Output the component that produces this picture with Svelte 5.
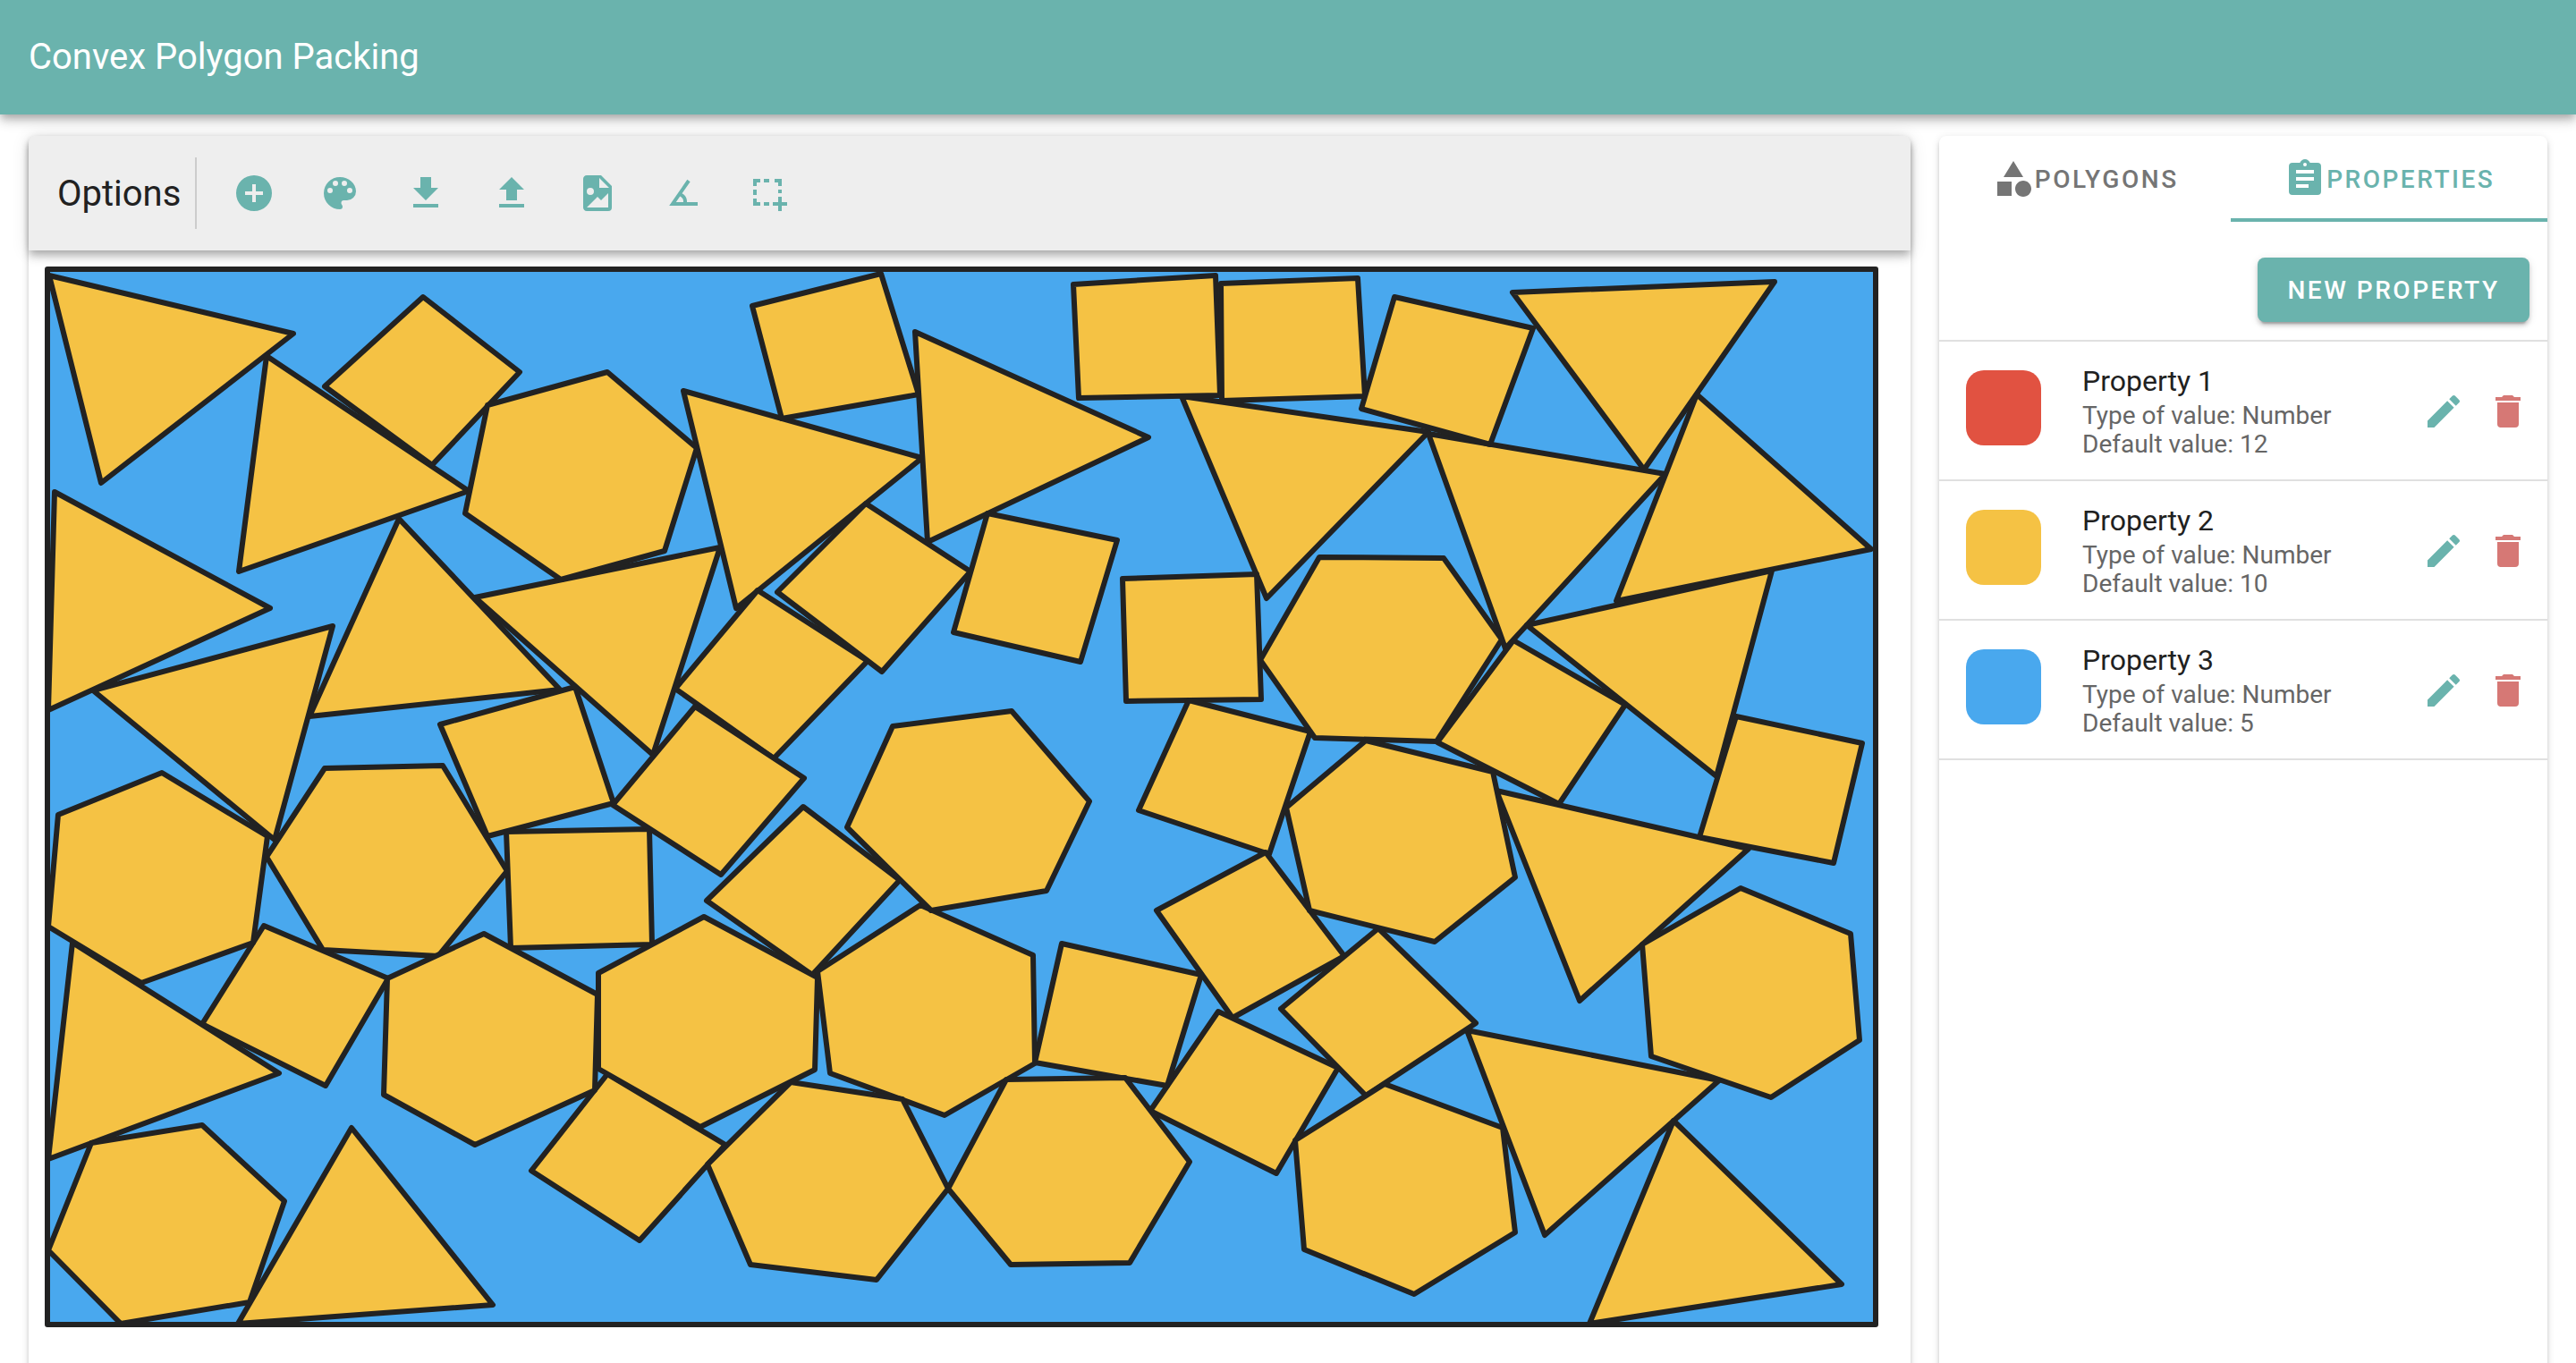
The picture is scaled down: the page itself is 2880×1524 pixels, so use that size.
<script>
  const tools = [
    { label: 'Add', path: 'M17,13H13V17H11V13H7V11H11V7H13V11H17M12,2A10,10 0 0,0 2,12A10,10 0 0,0 12,22A10,10 0 0,0 22,12A10,10 0 0,0 12,2Z' },
    { label: 'Colors', path: 'M17.5,12A1.5,1.5 0 0,1 16,10.5A1.5,1.5 0 0,1 17.5,9A1.5,1.5 0 0,1 19,10.5A1.5,1.5 0 0,1 17.5,12M14.5,8A1.5,1.5 0 0,1 13,6.5A1.5,1.5 0 0,1 14.5,5A1.5,1.5 0 0,1 16,6.5A1.5,1.5 0 0,1 14.5,8M9.5,8A1.5,1.5 0 0,1 8,6.5A1.5,1.5 0 0,1 9.5,5A1.5,1.5 0 0,1 11,6.5A1.5,1.5 0 0,1 9.5,8M6.5,12A1.5,1.5 0 0,1 5,10.5A1.5,1.5 0 0,1 6.5,9A1.5,1.5 0 0,1 8,10.5A1.5,1.5 0 0,1 6.5,12M12,3A9,9 0 0,0 3,12A9,9 0 0,0 12,21A1.5,1.5 0 0,0 13.5,19.5C13.5,19.11 13.35,18.76 13.11,18.5C12.88,18.23 12.73,17.88 12.73,17.5A1.5,1.5 0 0,1 14.23,16H16A5,5 0 0,0 21,11C21,6.58 16.97,3 12,3Z' },
    { label: 'Download', path: 'M5,20H19V18H5M19,9H15V3H9V9H5L12,16L19,9Z' },
    { label: 'Upload', path: 'M9,16V10H5L12,3L19,10H15V16H9M5,20V18H19V20H5Z' },
    { label: 'Export image', path: 'M13,9H18.5L13,3.5V9M6,2H14L20,8V20A2,2 0 0,1 18,22H6C4.89,22 4,21.1 4,20V4C4,2.89 4.89,2 6,2M6,20H15L18,20V12L14,16L12,14L6,20M8,9A2,2 0 0,0 6,11A2,2 0 0,0 8,13A2,2 0 0,0 10,11A2,2 0 0,0 8,9Z' },
    { label: 'Angle', path: 'M20,19H4.09L14.18,4.43L15.82,5.57L11.28,12.13C12.89,12.96 14,14.62 14,16.54C14,16.7 14,16.85 13.97,17H20V19M7.91,17H11.96C12,16.85 12,16.7 12,16.54C12,15.28 11.24,14.22 10.14,13.78L7.91,17Z' },
    { label: 'New selection', path: 'M3,4H7V6H5V8H3V4M9,4H12V6H9V4M15,4H19V8H17V6H15V4M3,10H5V13H3V10M17,10H19V12H17V10M3,15H5V17H7V19H3V15M9,17H12V19H9V17M17,14H19V17H22V19H19V22H17V19H14V17H17V14Z' }
  ];

  const icons = {
    shapes: 'M11,13.5V21.5H3V13.5H11M12,2L17.5,11H6.5L12,2M17.5,13C20,13 22,15 22,17.5C22,20 20,22 17.5,22C15,22 13,20 13,17.5C13,15 15,13 17.5,13Z',
    clipboard: 'M17,9H7V7H17M17,13H7V11H17M14,17H7V15H14M12,3A1,1 0 0,1 13,4A1,1 0 0,1 12,5A1,1 0 0,1 11,4A1,1 0 0,1 12,3M19,3H14.82C14.4,1.84 13.3,1 12,1C10.7,1 9.6,1.84 9.18,3H5A2,2 0 0,0 3,5V19A2,2 0 0,0 5,21H19A2,2 0 0,0 21,19V5A2,2 0 0,0 19,3Z',
    pencil: 'M20.71,7.04C21.1,6.65 21.1,6 20.71,5.63L18.37,3.29C18,2.9 17.35,2.9 16.96,3.29L15.12,5.12L18.87,8.87M3,17.25V21H6.75L17.81,9.93L14.06,6.18L3,17.25Z',
    trash: 'M19,4H15.5L14.5,3H9.5L8.5,4H5V6H19M6,19A2,2 0 0,0 8,21H16A2,2 0 0,0 18,19V7H6V19Z'
  };

  const properties = [
    { name: 'Property 1', type: 'Number', value: 12, color: '#e15241' },
    { name: 'Property 2', type: 'Number', value: 10, color: '#f5c244' },
    { name: 'Property 3', type: 'Number', value: 5, color: '#49a8ee' }
  ];

  const triangles = [
    '55,308 328,373 113,540',
    '298,398 524,549 267,639',
    '61,550 302,680 54,794',
    '372,700 104,772 307,939',
    '446,580 626,771 346,801',
    '531,668 805,612 730,844',
    '81,1054 312,1200 54,1296',
    '393,1261 551,1459 266,1480',
    '764,437 1031,512 823,680',
    '1023,371 1284,489 1037,606',
    '1321,443 1597,483 1416,669',
    '1597,485 1862,530 1683,725',
    '1691,327 1984,315 1838,525',
    '1897,441 2092,614 1807,672',
    '1981,638 1707,699 1919,868',
    '1673,884 1955,949 1766,1119',
    '1640,1152 1922,1208 1727,1381',
    '1871,1253 2059,1436 1777,1480'
  ];

  const squares = [
    '473,332 581,416 483,520 363,432',
    '492,810 643,768 686,898 545,935',
    '566,930 726,927 729,1056 571,1060',
    '295,1035 434,1094 364,1214 226,1145',
    '679,1201 594,1309 715,1387 811,1280',
    '847,660 970,739 865,848 755,770',
    '968,563 1085,639 986,751 869,662',
    '777,790 899,870 806,978 685,900',
    '898,902 1006,984 908,1090 790,1007',
    '841,342 985,306 1027,441 874,468',
    '1104,574 1249,604 1208,740 1066,707',
    '1200,318 1359,308 1364,442 1206,445',
    '1365,317 1518,311 1526,443 1366,448',
    '1559,332 1714,367 1666,497 1522,457',
    '1255,647 1405,642 1410,782 1259,784',
    '1329,783 1465,818 1419,955 1273,906',
    '1692,716 1817,788 1743,899 1607,830',
    '1941,801 2082,831 2050,965 1900,936',
    '1415,953 1503,1069 1378,1138 1293,1018',
    '1541,1038 1650,1144 1527,1225 1432,1128',
    '1362,1131 1496,1194 1427,1312 1286,1242',
    '1187,1055 1343,1090 1305,1214 1157,1188'
  ];

  const hexagons = [
    '679,416 779,501 743,616 627,648 520,574 545,453',
    '181,864 299,935 283,1054 158,1099 54,1036 65,911',
    '363,859 495,856 567,974 490,1069 361,1062 298,958',
    '226,1258 318,1343 279,1456 135,1480 54,1398 102,1278',
    '541,1044 668,1112 665,1219 531,1280 429,1224 433,1094',
    '787,1025 914,1093 911,1196 783,1260 669,1195 669,1088',
    '1029,1012 1155,1068 1157,1189 1056,1247 928,1200 914,1086',
    '998,812 1131,795 1218,896 1170,996 1041,1018 947,925',
    '884,1210 1009,1229 1060,1329 980,1431 839,1414 791,1302',
    '1125,1207 1258,1205 1330,1299 1263,1412 1130,1414 1060,1329',
    '1475,623 1614,624 1679,715 1606,829 1470,825 1409,738',
    '1527,828 1669,863 1694,981 1604,1053 1464,1018 1438,903',
    '1946,993 2069,1044 2079,1163 1980,1227 1846,1181 1836,1056',
    '1548,1212 1680,1261 1694,1378 1581,1447 1458,1397 1448,1275'
  ];

  const polygons = [...triangles, ...squares, ...hexagons];

  let tab = $state('properties');
</script>

{#snippet icon(path)}
  <svg class="icon" viewBox="0 0 24 24" aria-hidden="true"><path d={path} /></svg>
{/snippet}

<div class="app">
  <header class="app-bar">
    <h1>Convex Polygon Packing</h1>
  </header>

  <main class="content">
    <section class="card" aria-label="Workspace">
      <div class="toolbar">
        <h2>Options</h2>
        <div class="tools">
          {#each tools as tool}
            <button class="icon-button" aria-label={tool.label}>{@render icon(tool.path)}</button>
          {/each}
        </div>
      </div>
      <div class="canvas">
        <svg class="board" viewBox="50 298 2050 1186" role="img" aria-label="Packed polygons">
          <rect class="container" x="53" y="301" width="2044" height="1180" />
          {#each polygons as points}
            <polygon {points} />
          {/each}
          <rect class="frame" x="53" y="301" width="2044" height="1180" />
        </svg>
      </div>
    </section>

    <aside class="card" aria-label="Details">
      <div class="tabs" role="tablist">
        <button class="tab" class:active={tab === 'polygons'} role="tab" aria-selected={tab === 'polygons'} onclick={() => (tab = 'polygons')}>
          {@render icon(icons.shapes)}<span>POLYGONS</span>
        </button>
        <button class="tab" class:active={tab === 'properties'} role="tab" aria-selected={tab === 'properties'} onclick={() => (tab = 'properties')}>
          {@render icon(icons.clipboard)}<span>PROPERTIES</span>
        </button>
      </div>
      <div class="actions">
        <button class="primary">NEW PROPERTY</button>
      </div>
      <ul class="list">
        {#each properties as property}
          <li class="row">
            <span class="swatch" style="background: {property.color}"></span>
            <div class="info">
              <h3>{property.name}</h3>
              <p>Type of value: {property.type}</p>
              <p>Default value: {property.value}</p>
            </div>
            <div class="row-actions">
              <button class="edit" aria-label="Edit {property.name}">{@render icon(icons.pencil)}</button>
              <button class="delete" aria-label="Delete {property.name}">{@render icon(icons.trash)}</button>
            </div>
          </li>
        {/each}
      </ul>
    </aside>
  </main>
</div>

<style>
  :global(body) {
    margin: 0;
    background: #fff;
  }

  .app {
    --teal: #6ab3ad;
    --shadow-4: 0 4px 8px -2px rgba(0, 0, 0, 0.2), 0 8px 10px rgba(0, 0, 0, 0.14), 0 2px 20px rgba(0, 0, 0, 0.12);
    --shadow-2: 0 6px 2px -4px rgba(0, 0, 0, 0.2), 0 4px 4px rgba(0, 0, 0, 0.14), 0 2px 10px rgba(0, 0, 0, 0.12);
    height: 100vh;
    overflow: hidden;
    font-family: Roboto, 'Liberation Sans', sans-serif;
    color: #212121;
  }

  h1, h2, h3, p, ul {
    margin: 0;
    padding: 0;
    font-weight: 400;
  }

  button {
    border: 0;
    padding: 0;
    background: none;
    font: inherit;
    color: inherit;
    cursor: pointer;
  }

  .icon {
    display: block;
    flex: none;
    width: 48px;
    height: 48px;
    fill: currentColor;
  }

  .app-bar {
    display: flex;
    align-items: center;
    height: 128px;
    padding: 0 32px;
    background: var(--teal);
    color: #fff;
    box-shadow: var(--shadow-4);
  }

  h1, h2 {
    font-size: 40px;
    line-height: 50px;
  }

  .content {
    display: grid;
    grid-template-columns: calc(75% - 8px) minmax(0, 1fr);
    gap: 32px;
    padding: 24px 32px;
  }

  .card {
    min-height: 100vh;
    border-radius: 8px;
    background: #fff;
    box-shadow: var(--shadow-2);
  }

  .toolbar {
    display: flex;
    align-items: center;
    height: 128px;
    padding: 0 32px;
    border-radius: 8px 8px 0 0;
    background: #eee;
    box-shadow: var(--shadow-4);
  }

  .toolbar h2 {
    padding: 16px 16px 14px 0;
    border-right: 2px solid #ccc;
    margin-right: 16px;
  }

  .tools {
    display: flex;
    color: var(--teal);
  }

  .icon-button {
    padding: 24px;
  }

  .canvas {
    padding: 18px 36px 18px 18px;
  }

  .board {
    display: block;
    width: 100%;
  }

  .container {
    fill: #49a8ee;
  }

  .frame {
    fill: none;
  }

  .frame,
  polygon {
    stroke: #222;
    stroke-width: 6;
    stroke-linejoin: round;
  }

  polygon {
    fill: #f5c244;
  }

  .tabs {
    display: flex;
    height: 96px;
  }

  .tab {
    display: flex;
    flex: 1 1 auto;
    align-items: center;
    justify-content: center;
    padding: 4px 32px 0;
    border-bottom: 4px solid transparent;
    color: #757575;
  }

  .tab.active {
    border-color: var(--teal);
    color: var(--teal);
  }

  .tab,
  .primary {
    font-size: 28px;
    font-weight: 500;
    letter-spacing: 0.09em;
  }

  .actions {
    display: flex;
    justify-content: flex-end;
    padding: 40px 20px 20px;
    border-bottom: 2px solid #e0e0e0;
  }

  .primary {
    min-width: 304px;
    height: 72px;
    padding: 0 32px;
    border-radius: 8px;
    background: var(--teal);
    color: #fff;
    box-shadow: var(--shadow-2);
  }

  .list {
    list-style: none;
  }

  .row {
    display: flex;
    align-items: center;
    padding: 25px 20px 23px 30px;
    border-bottom: 2px solid #e0e0e0;
  }

  .swatch {
    flex: none;
    align-self: flex-start;
    width: 84px;
    height: 84px;
    margin: 7px 46px 0 0;
    border-radius: 20px;
  }

  .info {
    flex: 1;
    min-width: 0;
  }

  h3 {
    margin-bottom: 4px;
    font-size: 32px;
    line-height: 38px;
  }

  p {
    color: #666;
    font-size: 28px;
    line-height: 32px;
  }

  .row-actions {
    display: flex;
    gap: 24px;
  }

  .edit {
    color: var(--teal);
  }

  .delete {
    color: #d67875;
  }
</style>
